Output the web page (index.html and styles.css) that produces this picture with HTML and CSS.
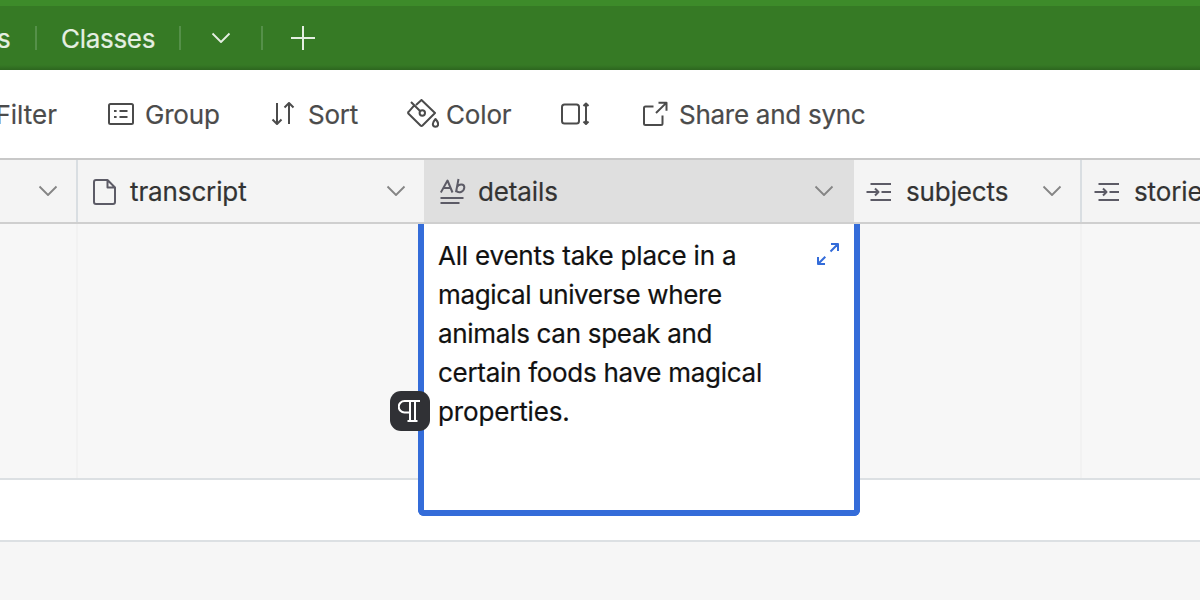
FILE: index.html
```html
<!DOCTYPE html>
<html lang="en">
<head>
<meta charset="utf-8">
<title>Table view</title>
<link rel="stylesheet" href="styles.css">
</head>
<body>
<svg class="defs" aria-hidden="true">
  <symbol id="chevron" viewBox="0 0 20 12"><path d="M1.500 1.500 10 10l8.500-8.500"/></symbol>
  <symbol id="linked" viewBox="0 0 26 20"><path d="M4.500 2h20.500M4.500 18h20.500M.5 10h12M9 6.500l3.500 3.500L9 13.500M15.500 10h9.500"/></symbol>
</svg>
<header class="tabs">
  <div class="tab tab-prev"><span>s</span></div>
  <div class="tab tab-classes"><span>Classes</span></div>
  <div class="tab tab-menu"><svg class="icon chevron" width="20" height="12"><use href="#chevron"/></svg></div>
  <div class="tab-add"><svg class="icon" width="24" height="24" viewBox="0 0 24 24"><path d="M12 0v24M0 12h24"/></svg></div>
</header>
<nav class="toolbar">
  <div class="tool filter"><span>Filter</span></div>
  <div class="tool group">
    <svg class="icon" width="28" height="24" viewBox="0 0 28 24"><rect x="2" y="2" width="24" height="20" rx="1.500"/><path d="M7 9h2.600M7 15h2.600M12.500 9h8M12.500 15h8"/></svg>
    <span>Group</span>
  </div>
  <div class="tool sort">
    <svg class="icon" width="24" height="24" viewBox="0 0 24 24"><path d="M6 1v20.500M1.500 17.500 6 22l4.500-4.500M18 22V1.500M13.500 5.500 18 1l4.500 4.500"/></svg>
    <span>Sort</span>
  </div>
  <div class="tool color">
    <svg class="icon" width="32" height="30" viewBox="0 0 32 30"><path d="M4 3l9.300 9.300M6.800 6.800 1.600 12.800q-1 1 0 2L13.500 26.500q1 1 2 0L28 14 14.500 1 9 6"/><circle cx="15.300" cy="14" r="2.700"/><path d="M28.500 20c-1.700 2-2.700 3.500-2.700 5a2.700 2.700 0 0 0 5.400 0c0-1.500-1-3-2.700-5Z"/></svg>
    <span>Color</span>
  </div>
  <div class="tool height">
    <svg class="icon" width="32" height="24" viewBox="0 0 32 24"><rect x="2" y="2.500" width="17" height="19" rx="2.500"/><path d="M26 1.500v20.500M23.500 4 26 1.500 28.500 4M23.500 19.500 26 22l2.500-2.500"/></svg>
  </div>
  <div class="tool share">
    <svg class="icon" width="26" height="26" viewBox="0 0 26 26"><path d="M11.500 5.500H3.500Q2 5.500 2 7v15.500Q2 24 3.500 24H19q1.500 0 1.500-1.500v-8M16.500 1.700h8v8M24.300 1.900 14 12"/></svg>
    <span>Share and sync</span>
  </div>
</nav>
<main class="grid">
  <div class="head">
    <div class="col c-first"><svg class="icon chevron" width="20" height="12"><use href="#chevron"/></svg></div>
    <div class="col c-transcript">
      <svg class="icon" width="24" height="28" viewBox="0 0 24 28"><path d="M14.500 3H3Q1 3 1 5v20q0 2 2 2h17q2 0 2-2V10.500ZM14.500 3v7.500H22"/></svg>
      <span>transcript</span>
      <svg class="icon chevron" width="20" height="12"><use href="#chevron"/></svg>
    </div>
    <div class="col c-details">
      <svg class="icon" width="26" height="26" viewBox="0 0 26 26"><path d="M.8 14.500 7.500 2.500 12.500 14.500M3.500 10h7.500M18.500 1 16 14.300M17 9c2-3.500 7.500-3.200 7.300.5-.2 4.500-6 6.500-8 3M.5 20h23M.5 25h19"/></svg>
      <span>details</span>
      <svg class="icon chevron" width="20" height="12"><use href="#chevron"/></svg>
    </div>
    <div class="col c-subjects">
      <svg class="icon linked" width="26" height="20"><use href="#linked"/></svg>
      <span>subjects</span>
      <svg class="icon chevron" width="20" height="12"><use href="#chevron"/></svg>
    </div>
    <div class="col c-stories">
      <svg class="icon linked" width="26" height="20"><use href="#linked"/></svg>
      <span>stories</span>
    </div>
  </div>
  <div class="row">
    <div class="cell c-first"></div>
    <div class="cell c-transcript"></div>
    <div class="cell c-details">
      <div class="editor">
        <p><span class="l1">All events take place in a</span><br><span class="l2">magical universe where</span><br><span class="l3">animals can speak and</span><br><span class="l4">certain foods have magical</span><br><span class="l5">properties.</span></p>
        <svg class="icon expand" width="24" height="24" viewBox="0 0 24 24"><path d="M15 2h7v7M21.700 2.300 14.500 9.500M2 15v7h7M2.300 21.700l7-7"/></svg>
        <div class="badge"><svg class="icon" width="24" height="24" viewBox="0 0 24 24"><path d="M22 2H6.500a5.600 5.600 0 0 0 0 11.500H12M12 2v20M17 2v20M9.500 22h10"/></svg></div>
      </div>
    </div>
    <div class="cell c-subjects"></div>
    <div class="cell c-stories"></div>
  </div>
  <div class="add-row"></div>
</main>
</body>
</html>
```
FILE: styles.css
```css
* { box-sizing: border-box; }
body {
  margin: 0;
  width: 1200px;
  height: 600px;
  overflow: hidden;
  background: #f6f6f6;
  font: 26px/32px Inter, sans-serif;
  color: #333;
  -webkit-text-stroke: 0.2px;
}
.defs { position: absolute; width: 0; height: 0; }
.icon { display: block; flex: none; fill: none; stroke: currentColor; stroke-width: 2; stroke-linejoin: round; }
.chevron { stroke-width: 1.8; }
span { white-space: nowrap; }
.tab span, .tool span, .col span { padding-top: 2px; }

.tabs {
  display: flex;
  align-items: center;
  height: 70px;
  border-top: 6px solid #3d8b2a;
  background: linear-gradient(#367a25 calc(100% - 5px), #2d661f);
  color: #e5efe2;
}
.tab { display: flex; align-items: center; height: 24px; border-right: 2px solid #559049; }
.tab-prev { width: 37px; }
.tab-prev span { margin-left: -3px; }
.tab-classes { width: 144px; padding-left: 24px; letter-spacing: -0.3px; }
.tab-menu { width: 82px; padding-left: 30px; }
.tab-add { padding-left: 28px; }

.toolbar { display: flex; align-items: center; height: 88px; background: #fff; color: #4b4b4b; }
.tool { display: flex; align-items: center; }
.filter { width: 57px; justify-content: flex-end; }
.group { width: 213px; padding-left: 50px; gap: 10px; letter-spacing: -0.2px; }
.sort { width: 135px; padding-left: 1px; gap: 13px; letter-spacing: -0.2px; }
.color { width: 155px; padding-left: 2px; gap: 7px; letter-spacing: -0.15px; }
.height { width: 82px; }
.share { gap: 11px; letter-spacing: -0.27px; }

.head { display: flex; height: 66px; border-top: 2px solid #c8c8c8; border-bottom: 2px solid #cfcfcf; background: #f4f4f4; }
.col { display: flex; align-items: center; flex: none; border-right: 2px solid #d9dee2; color: #5c5b66; letter-spacing: -0.12px; }
.col span { color: #333; }
.col .chevron { margin-left: auto; color: #858585; }
.linked { margin-top: 2px; }
.c-first { width: 78px; }
.c-transcript { width: 346px; }
.c-details { width: 430px; }
.c-subjects { width: 228px; }
.c-stories { width: 118px; }
.col.c-first { padding-right: 18px; }
.col.c-transcript { padding: 0 18px 0 15px; gap: 13px; border-right: 0; }
.col.c-details { padding: 0 20px 0 16px; gap: 12px; border-right: 0; background: #dfdfdf; }
.col.c-subjects { padding: 0 18px 0 12px; gap: 14px; }
.col.c-stories { padding-left: 12px; gap: 14px; border-right: 0; overflow: hidden; }

.row { display: flex; height: 256px; border-bottom: 2px solid #dce0e3; background: #f7f7f7; }
.cell { flex: none; border-right: 2px solid #f2f2f2; }
.cell.c-transcript, .cell.c-details, .cell.c-stories { border-right: 0; }
.cell.c-details { position: relative; }
.editor {
  position: absolute;
  top: 0;
  left: -6px;
  width: 442px;
  height: 292px;
  border: 6px solid #346cd9;
  border-top: 0;
  border-radius: 0 0 6px 6px;
  background: #fff;
  color: #111;
}
.editor p { margin: 0; padding: 12px 14px; line-height: 39px; }
.l1 { letter-spacing: -0.2px; }
.l2 { letter-spacing: -0.35px; }
.l3 { letter-spacing: -0.3px; }
.l4 { letter-spacing: -0.28px; }
.l5 { letter-spacing: -0.15px; }
.expand { position: absolute; top: 18px; right: 14px; color: #346cd9; }
.badge {
  position: absolute;
  top: 167px;
  left: -34px;
  display: grid;
  place-items: center;
  width: 40px;
  height: 40px;
  border-radius: 11px;
  background: #303135;
  color: #fff;
}
.add-row { height: 62px; border-bottom: 2px solid #dce0e3; background: #fff; }
```
